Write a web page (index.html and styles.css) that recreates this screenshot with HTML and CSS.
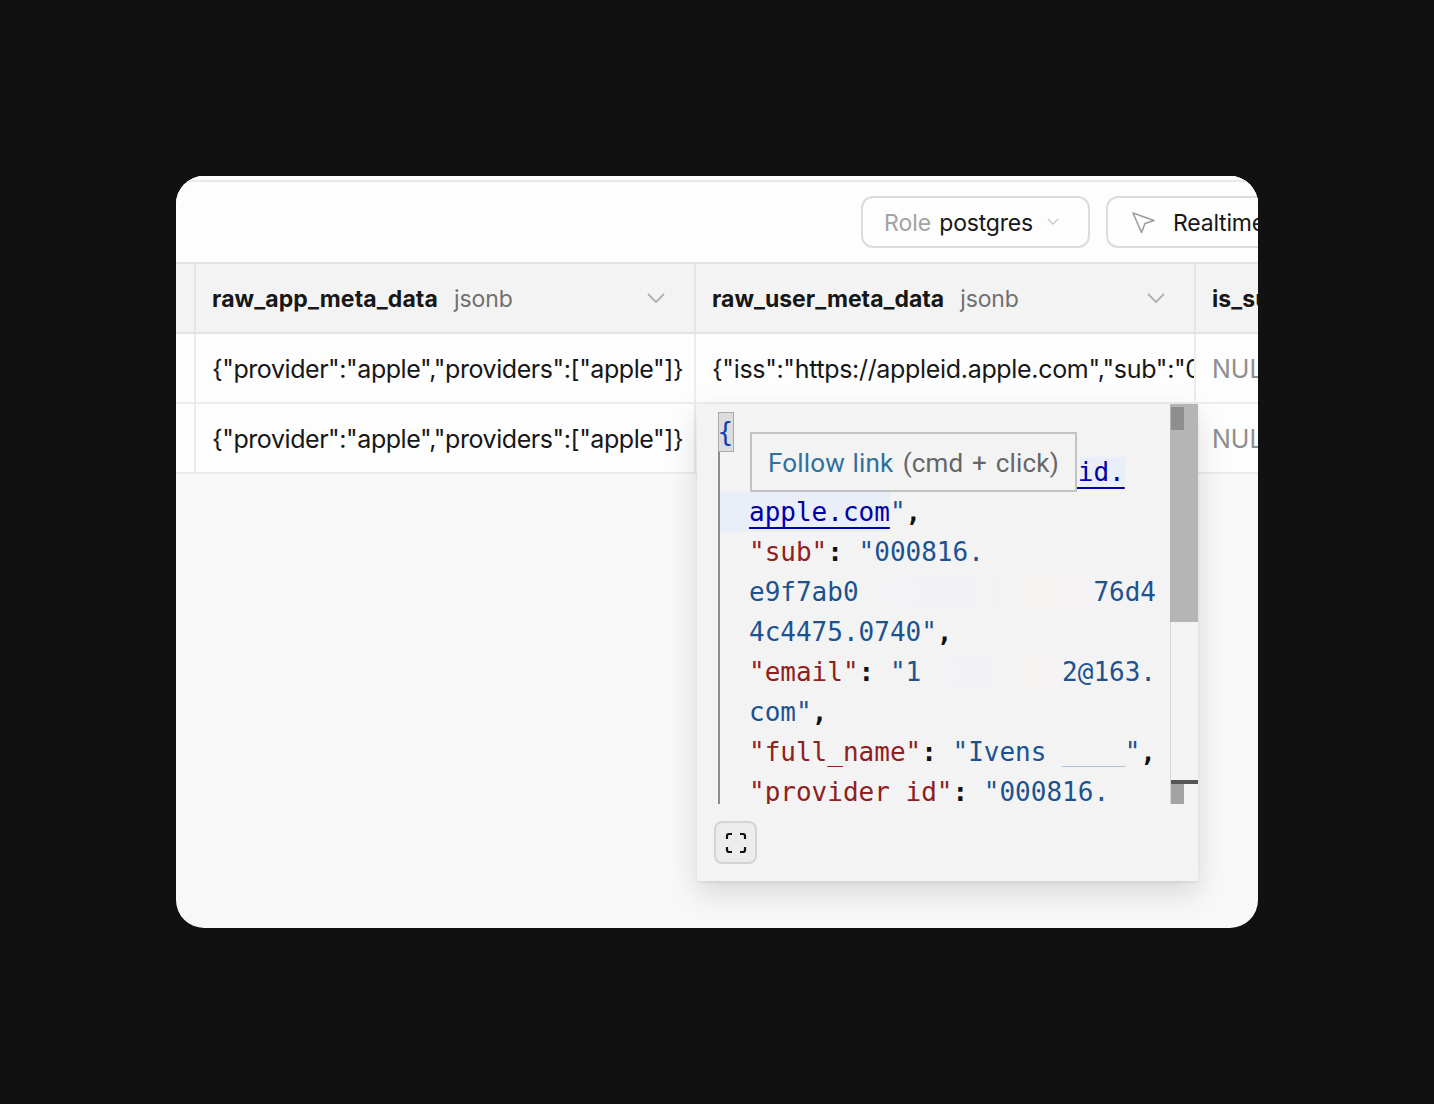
FILE: index.html
```html
<!DOCTYPE html>
<html lang="en">
<head>
<meta charset="utf-8">
<title>Table editor</title>
<link rel="stylesheet" href="styles.css">
</head>
<body>
<main class="card">
  <div class="toolbar">
    <button class="pill role"><span class="muted">Role</span><span class="value">postgres</span>
      <svg class="chev-sm" viewBox="0 0 16 10" width="14" height="9"><path d="M2 2l6 6 6-6"/></svg>
    </button>
    <button class="pill realtime">
      <svg class="cursor" viewBox="0 0 24 24" width="24" height="24"><path d="M2 3l21 7.5-9 3-3.5 9z"/></svg>
      <span class="value">Realtime inspector</span>
    </button>
  </div>
  <div class="table">
    <div class="cell head gutter"></div>
    <div class="cell head"><b>raw_app_meta_data</b><span class="type">jsonb</span><svg class="chev" viewBox="0 0 18 10" width="18" height="10"><path d="M1 1l8 8 8-8"/></svg></div>
    <div class="cell head"><b class="tight">raw_user_meta_data</b><span class="type">jsonb</span><svg class="chev" viewBox="0 0 18 10" width="18" height="10"><path d="M1 1l8 8 8-8"/></svg></div>
    <div class="cell head"><b>is_super_admin</b></div>

    <div class="cell gutter"></div>
    <div class="cell">{"provider":"apple","providers":["apple"]}</div>
    <div class="cell wide">{"iss":"https://appleid.apple.com","sub":"000816.e9f7ab0"}</div>
    <div class="cell null">NULL</div>

    <div class="cell gutter"></div>
    <div class="cell">{"provider":"apple","providers":["apple"]}</div>
    <div class="cell"></div>
    <div class="cell null">NULL</div>
  </div>

  <section class="popup">
    <div class="editor">
      <div class="code">
        <div class="line brace"><span class="fold">{</span></div>
        <div class="line"><span class="k">"iss"</span><span class="p">: </span><span class="s">"</span><a class="link hl">https://appleid.</a></div>
        <div class="line active"><a class="link">apple.com</a><span class="s">"</span><span class="p">,</span></div>
        <div class="line"><span class="k">"sub"</span><span class="p">: </span><span class="s">"000816.</span></div>
        <div class="line"><span class="s">e9f7ab0<span class="redact">&nbsp;&nbsp;&nbsp;&nbsp;&nbsp;&nbsp;&nbsp;&nbsp;&nbsp;&nbsp;&nbsp;&nbsp;&nbsp;&nbsp;&nbsp;</span>76d4</span></div>
        <div class="line"><span class="s">4c4475.0740"</span><span class="p">,</span></div>
        <div class="line"><span class="k">"email"</span><span class="p">: </span><span class="s">"1<span class="redact">&nbsp;&nbsp;&nbsp;&nbsp;&nbsp;&nbsp;&nbsp;&nbsp;&nbsp;</span>2@163.</span></div>
        <div class="line"><span class="s">com"</span><span class="p">,</span></div>
        <div class="line"><span class="k">"full_name"</span><span class="p">: </span><span class="s">"Ivens <span class="faded">____</span>"</span><span class="p">,</span></div>
        <div class="line"><span class="k">"provider_id"</span><span class="p">: </span><span class="s">"000816.</span></div>
      </div>
      <div class="scrollbar">
        <div class="thumb"><span class="mark"></span></div>
        <div class="rest">
          <span class="cursor-line"></span>
          <span class="mark-low"></span>
        </div>
      </div>
      <div class="tooltip"><span class="follow">Follow link</span> <span class="hint">(cmd + click)</span></div>
    </div>
    <div class="actions">
      <button class="expand" aria-label="Expand">
        <svg viewBox="0 0 22 22" width="22" height="22"><path d="M2 7V4a2 2 0 0 1 2-2h3M15 2h3a2 2 0 0 1 2 2v3M20 15v3a2 2 0 0 1-2 2h-3M7 20H4a2 2 0 0 1-2-2v-3"/></svg>
      </button>
    </div>
  </section>
</main>
</body>
</html>
```
FILE: styles.css
```css
* { box-sizing: border-box; }
html, body { margin: 0; height: 100%; }
body {
  background: #111111;
  display: flex;
  padding: 176px;
  font-family: Inter, "Liberation Sans", sans-serif;
  color: #171717;
  overflow: hidden;
}
.card {
  position: relative;
  width: 1082px;
  height: 752px;
  background: #f8f8f8;
  border-radius: 28px;
  overflow: hidden;
  display: flex;
  flex-direction: column;
}
.toolbar {
  flex: none;
  height: 88px;
  background: #fdfdfd;
  border-bottom: 2px solid #e4e4e4;
  padding: 20px 0 0 685px;
  display: flex;
  align-items: flex-start;
  gap: 16px;
  box-shadow: inset 0 4px 0 #ffffff, inset 0 6px 0 #e9e9e9;
}
.pill {
  flex: none;
  height: 52px;
  background: #fdfdfd;
  border: 2px solid #dcdcdc;
  border-radius: 12px;
  display: flex;
  align-items: center;
  font: 400 23px Inter, "Liberation Sans", sans-serif;
  color: #171717;
  padding: 2px 0 0;
  white-space: nowrap;
}
.role { width: 229px; padding-left: 21px; }
.realtime { width: 280px; padding-left: 23px; }
.muted { color: #a3a3a3; margin-right: 8px; }
.value { letter-spacing: -0.2px; }
.chev-sm { margin-left: 13px; margin-top: -3px; fill: none; stroke: #c2c2c2; stroke-width: 1.6; }
.cursor { margin-right: 18px; margin-top: -2px; fill: none; stroke: #9e9e9e; stroke-width: 1.6; stroke-linejoin: round; }

.table {
  display: grid;
  grid-template-columns: 20px 500px 500px 1fr;
  grid-template-rows: 70px 70px 70px;
  font-size: 25px;
}
.cell {
  min-width: 0;
  display: flex;
  align-items: center;
  padding: 2px 0 0 16px;
  background: #fdfdfd;
  border-right: 2px solid #ececec;
  border-bottom: 2px solid #ececec;
  white-space: nowrap;
  overflow: hidden;
  letter-spacing: -0.44px;
}
.cell:nth-child(4n) { border-right: 0; }
.wide { letter-spacing: -0.32px; }
.gutter { padding: 0; }
.head { background: #f3f3f3; border-color: #e4e4e4; font-size: 23px; position: relative; letter-spacing: 0.1px; }
.head b { font-weight: 700; }
.head .tight { letter-spacing: 0; }
.type { color: #707070; margin-left: 16px; letter-spacing: -0.1px; }
.chev { position: absolute; left: 451px; top: 29px; fill: none; stroke: #b0b0b0; stroke-width: 1.8; }
.null { color: #8f8f8f; letter-spacing: 0; }

.popup {
  position: absolute;
  left: 521px;
  top: 228px;
  width: 501px;
  height: 477px;
  background: #f3f3f3;
  box-shadow: 0 2px 3px rgba(0, 0, 0, 0.06), 0 12px 28px rgba(0, 0, 0, 0.13);
  display: flex;
  flex-direction: column;
}
.editor {
  position: relative;
  height: 400px;
  display: flex;
  overflow: hidden;
}
.code {
  flex: 1;
  min-width: 0;
  padding: 8px 0 0 21px;
  position: relative;
  font: 26px/40px "DejaVu Sans Mono", monospace;
}
.code::before {
  content: "";
  position: absolute;
  left: 21px;
  top: 36px;
  bottom: 0;
  width: 2px;
  background: #8c8c8c;
}
.line { height: 40px; padding-left: 31px; white-space: pre; }
.brace { padding-left: 0; position: relative; }
.fold {
  display: block;
  width: 16px;
  height: 40px;
  background: #dcdcdc;
  border: 1px solid #a8a8a8;
  color: #0a3fb5;
  line-height: 38px;
  text-indent: -1.5px;
}
.active { background: linear-gradient(#e9eef8, #e9eef8) no-repeat 0 0 / 172px 100%; }
.k { color: #8f2020; }
.p { color: #111111; font-weight: 700; }
.s { color: #1d5290; }
.link {
  color: #0000a8;
  text-decoration: underline;
  text-decoration-skip-ink: none;
  text-underline-offset: 6px;
  text-decoration-thickness: 2px;
}
.hl { background: linear-gradient(90deg, transparent 0, transparent 82%, #e9eef8 82%); }
.redact { background: linear-gradient(90deg, #f3f3f4, #f2f1f5 45%, #f5f4f1 75%, #f5f2f5); }
.faded { color: #a9c2dc; }
.scrollbar {
  flex: none;
  width: 28px;
  display: flex;
  flex-direction: column;
  border-left: 1px solid #d8d8d8;
}
.thumb {
  height: 218px;
  margin-left: -1px;
  background: #b5b5b5;
  padding: 3px 0 0 1px;
}
.mark { display: block; width: 13px; height: 23px; background: #8e8e8e; }
.rest { flex: 1; padding-top: 158px; }
.cursor-line { display: block; height: 4px; background: #555555; }
.mark-low { display: block; width: 13px; height: 20px; background: #a3a3a3; }
.tooltip {
  position: absolute;
  left: 53px;
  top: 28px;
  width: 327px;
  height: 60px;
  background: #f3f3f3;
  border: 2px solid #c2c2c2;
  padding-left: 16px;
  font: 400 26px/58px Roboto, sans-serif;
  color: #666666;
  white-space: nowrap;
}
.follow { color: #2f709f; word-spacing: 1px; letter-spacing: 0.15px; }
.hint { margin-left: 3px; letter-spacing: 0.2px; word-spacing: 2px; }
.actions { padding: 17px 0 0 18px; }
.expand {
  width: 43px;
  height: 43px;
  margin-left: -1px;
  padding: 0;
  background: #ececec;
  border: 2px solid #d4d4d4;
  border-radius: 8px;
  display: flex;
  align-items: center;
  justify-content: center;
}
.expand svg { fill: none; stroke: #111111; stroke-width: 2.2; }
```
